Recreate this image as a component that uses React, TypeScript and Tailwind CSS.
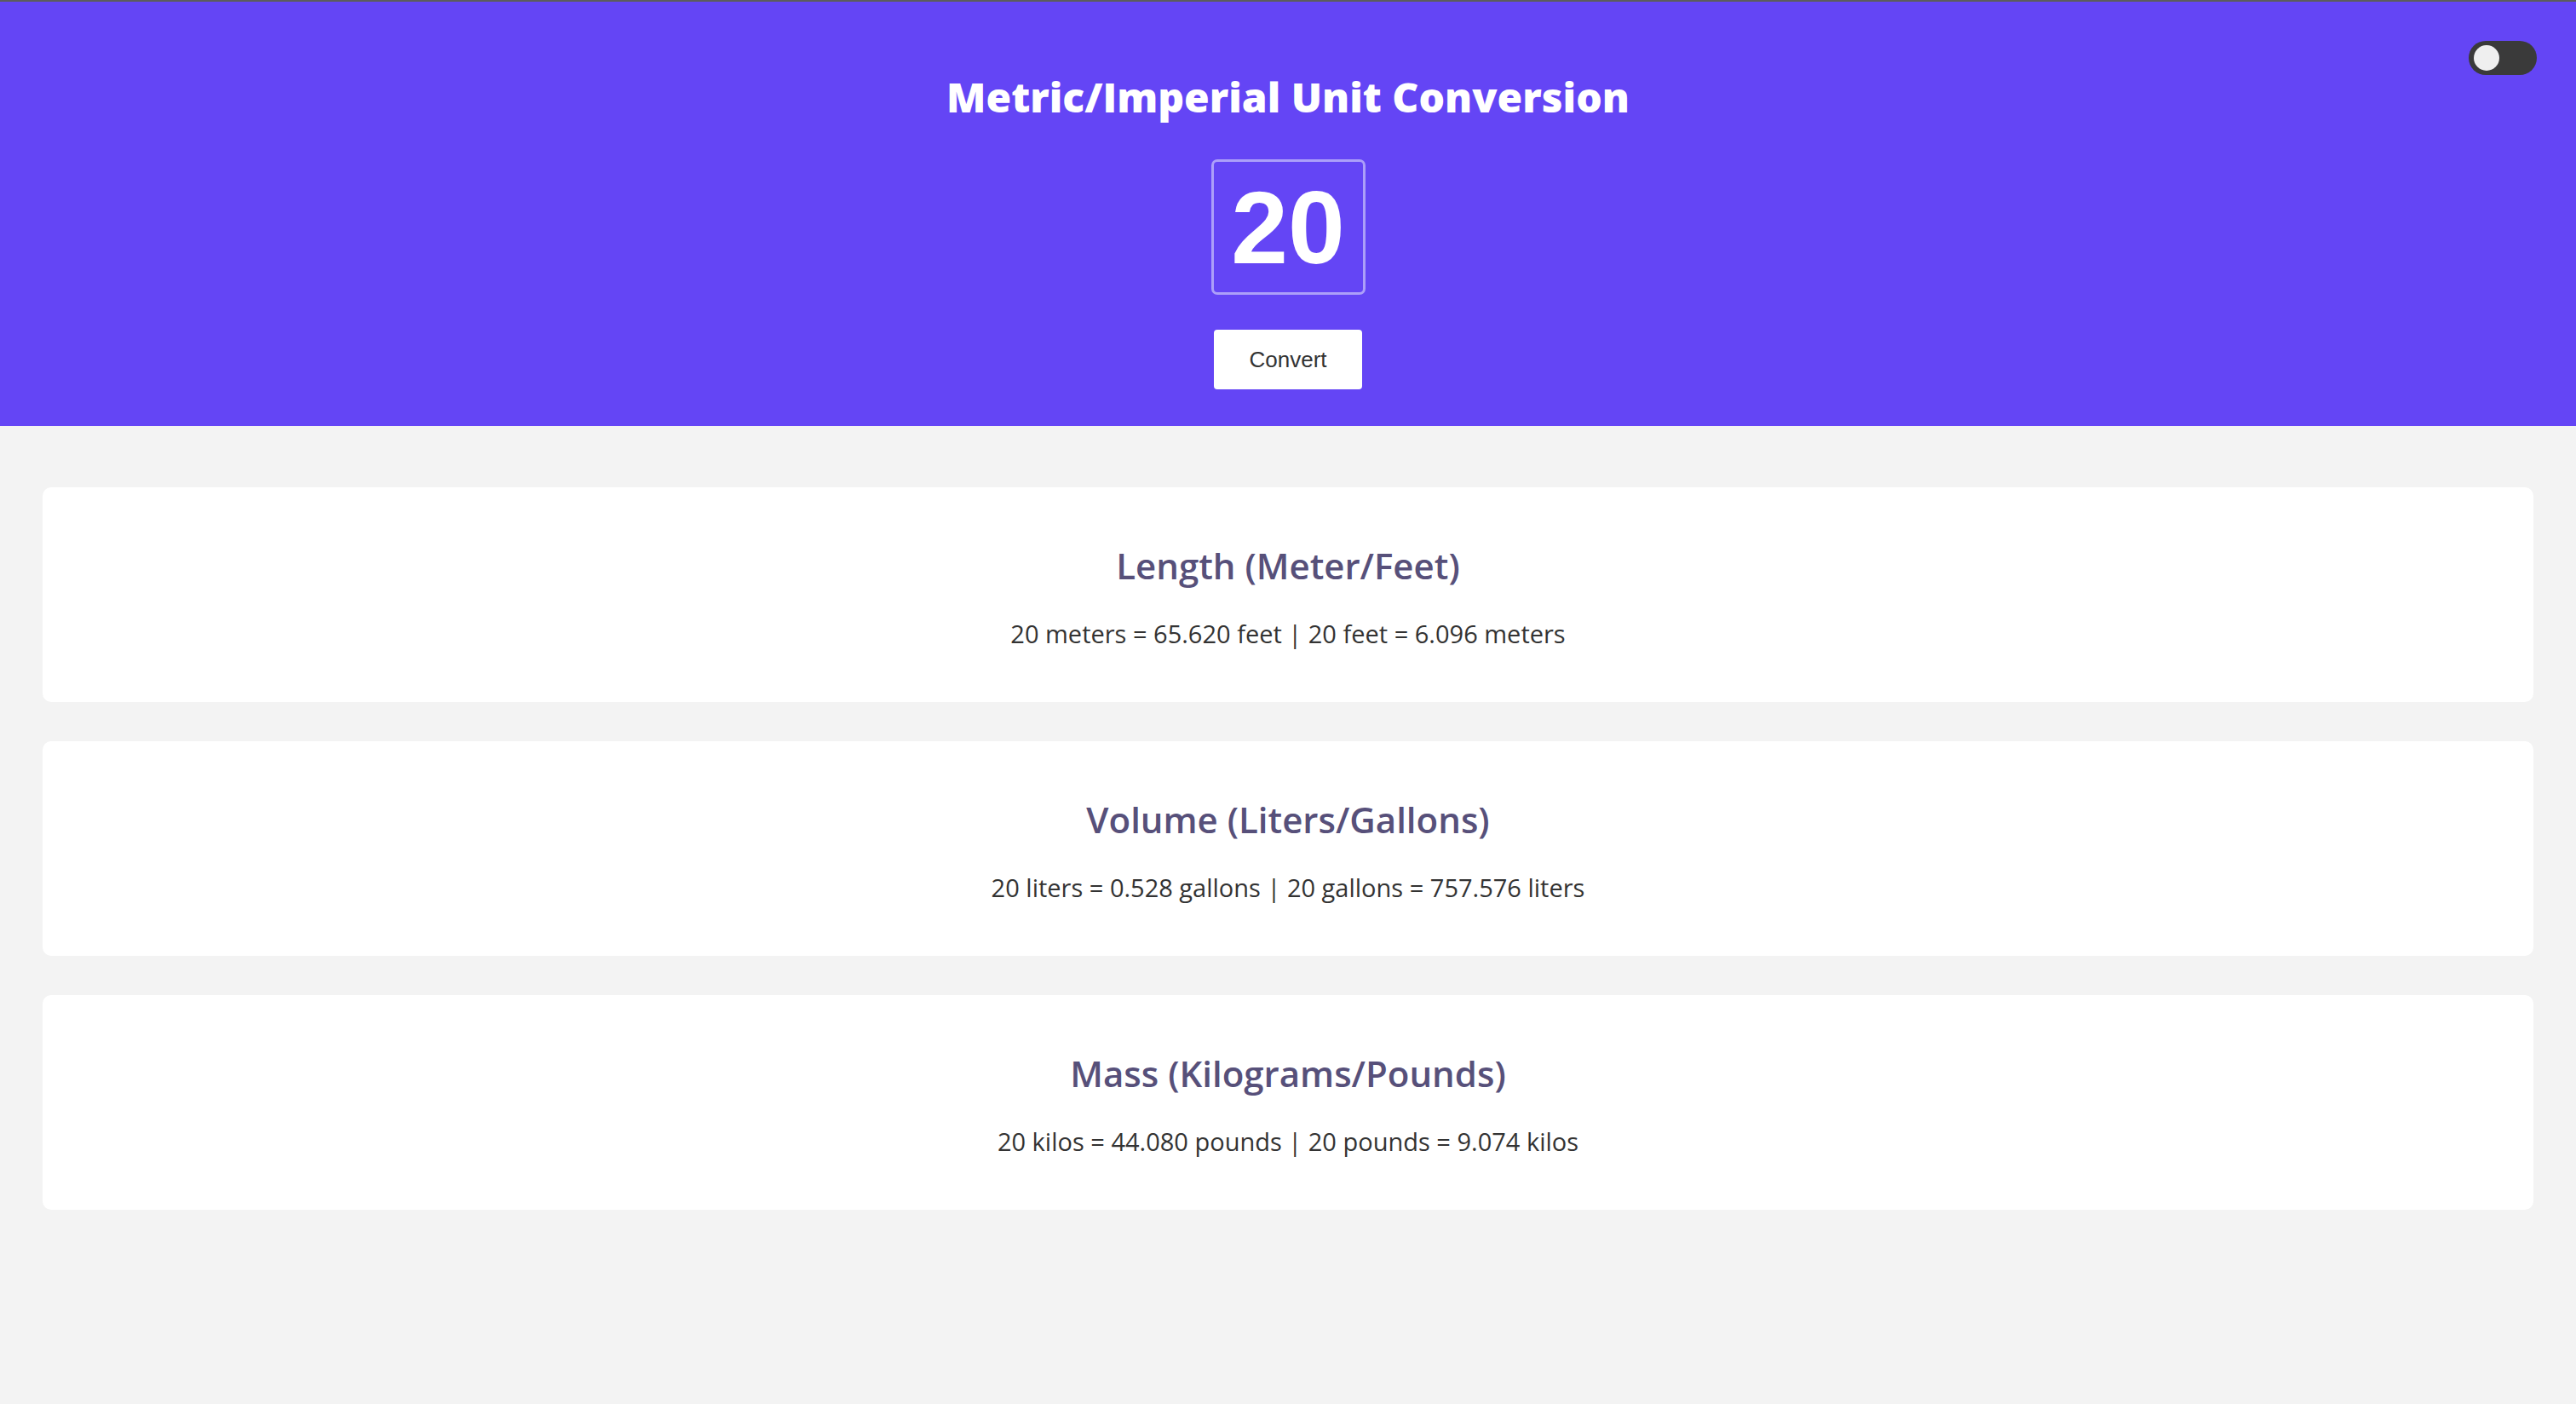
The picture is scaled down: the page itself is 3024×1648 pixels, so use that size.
import React, { useState } from "react";

const conversions = [
  {
    title: "Length (Meter/Feet)",
    text: "20 meters = 65.620 feet | 20 feet = 6.096 meters",
  },
  {
    title: "Volume (Liters/Gallons)",
    text: "20 liters = 0.528 gallons | 20 gallons = 757.576 liters",
  },
  {
    title: "Mass (Kilograms/Pounds)",
    text: "20 kilos = 44.080 pounds | 20 pounds = 9.074 kilos",
  },
];

const App = () => {
  const [value, setValue] = useState("20");

  return (
    <div className="min-h-screen bg-[#f3f3f3] font-['Open_Sans',sans-serif]">
      <header className="relative flex flex-col items-center border-t-2 border-[#5c5c5c] bg-[#6445f5] pt-[88px] pb-[43px]">
        <button className="absolute right-[46px] top-[46px] flex h-[40px] w-[80px] items-center rounded-full bg-[#3a3a3a] px-[6px]">
          <span className="h-[30px] w-[30px] rounded-full bg-[#efefef]"></span>
        </button>

        <h1 className="text-[48px] leading-none font-extrabold text-white">
          Metric/Imperial Unit Conversion
        </h1>

        <input
          value={value}
          onChange={(e) => setValue(e.target.value)}
          className="mt-[49px] h-[159px] w-[181px] rounded-[7px] border-[3px] border-[#ac9ff9] bg-transparent text-center font-['Liberation_Sans',Arial,sans-serif] text-[120px] font-bold text-white outline-none"
        />

        <button className="mt-[41px] h-[70px] w-[174px] rounded-[4px] bg-white font-['Liberation_Sans',Arial,sans-serif] text-[26px] text-[#333]">
          Convert
        </button>
      </header>

      <main className="flex flex-col gap-[46px] px-[50px] pt-[72px]">
        {conversions.map((c) => (
          <div
            key={c.title}
            className="flex h-[252px] flex-col items-center rounded-[10px] bg-white pt-[71px]"
          >
            <h2 className="text-[42px] leading-none font-semibold text-[#57507a]">{c.title}</h2>
            <p className="mt-[44px] text-[29px] leading-none text-[#333]">{c.text}</p>
          </div>
        ))}
      </main>
    </div>
  );
};

export default App;
